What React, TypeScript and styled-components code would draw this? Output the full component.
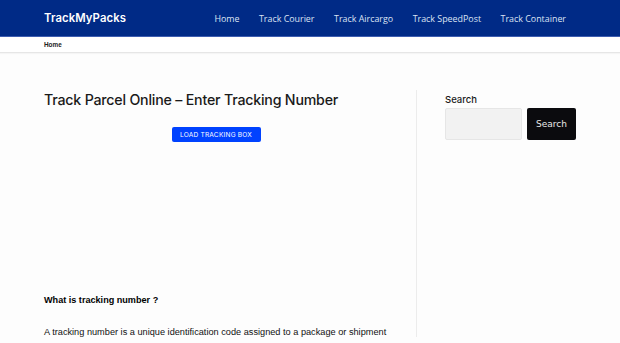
import styled, { createGlobalStyle } from 'styled-components';

const GlobalStyle = createGlobalStyle`
  html, body {
    margin: 0;
    padding: 0;
    background: #fdfdfd;
    font-family: 'Liberation Sans', Arial, sans-serif;
    overflow: hidden;
  }
`;

const navLinks = ['Home', 'Track Courier', 'Track Aircargo', 'Track SpeedPost', 'Track Container'];

const App = () => {
  return (
    <>
      <GlobalStyle />
      <Header>
        <HeaderInner>
          <Logo>TrackMyPacks</Logo>
          <Nav>
            {navLinks.map((link) => (
              <NavLink key={link}>{link}</NavLink>
            ))}
          </Nav>
        </HeaderInner>
      </Header>
      <Breadcrumb>
        <BreadcrumbInner>Home</BreadcrumbInner>
      </Breadcrumb>
      <Container>
        <Main>
          <Title>Track Parcel Online – Enter Tracking Number</Title>
          <ButtonRow>
            <LoadButton>LOAD TRACKING BOX</LoadButton>
          </ButtonRow>
          <Spacer />
          <SubHeading>What is tracking number ?</SubHeading>
          <Paragraph>
            A tracking number is a unique identification code assigned to a package or shipment
          </Paragraph>
        </Main>
        <Sidebar>
          <WidgetTitle>Search</WidgetTitle>
          <SearchForm>
            <SearchInput />
            <SearchButton>Search</SearchButton>
          </SearchForm>
        </Sidebar>
      </Container>
    </>
  );
};

export default App;

const Header = styled.header`
  background: #002a86;
  height: 36px;
  border-bottom: 1px solid #3d5db0;
`;

const HeaderInner = styled.div`
  display: flex;
  align-items: center;
  justify-content: space-between;
  height: 100%;
  padding: 0 44px 0 44px;
`;

const Logo = styled.div`
  color: #ffffff;
  font-family: Inter, 'Noto Sans', sans-serif;
  font-weight: 600;
  font-size: 11.3px;
  letter-spacing: 0.1px;
`;

const Nav = styled.nav`
  display: flex;
  gap: 19.5px;
  margin-right: 10px;
`;

const NavLink = styled.a`
  color: #dce3f3;
  font-family: 'Open Sans', 'Noto Sans', sans-serif;
  font-size: 8.9px;
`;

const Breadcrumb = styled.div`
  background: #ffffff;
  height: 15px;
  border-bottom: 1px solid #e6e6e6;
  box-shadow: 0 1px 1px rgba(0, 0, 0, 0.03);
`;

const BreadcrumbInner = styled.div`
  padding: 4px 44px 0;
  font-size: 6.4px;
  font-weight: bold;
  color: #222;
`;

const Container = styled.div`
  display: flex;
  padding: 0 44px;
`;

const Main = styled.main`
  width: 372px;
  border-right: 1px solid #ececec;
  margin-top: 37px;
  padding-top: 1px;
`;

const Title = styled.h1`
  margin: 0;
  font-family: Inter, 'Noto Sans', sans-serif;
  font-weight: 500;
  font-size: 14.2px;
  color: #1a1a1a;
  letter-spacing: -0.2px;
  line-height: 18px;
`;

const ButtonRow = styled.div`
  display: flex;
  justify-content: center;
  margin-top: 18px;
  padding-right: 28px;
`;

const LoadButton = styled.button`
  background: #0042ff;
  color: #ffffff;
  border: none;
  border-radius: 2px;
  height: 15px;
  width: 89px;
  padding: 0;
  font-family: Inter, sans-serif;
  font-size: 6.6px;
  letter-spacing: 0.2px;
`;

const Spacer = styled.div`
  height: 153px;
`;

const SubHeading = styled.h3`
  margin: 0;
  font-size: 9.1px;
  font-weight: bold;
  color: #000;
`;

const Paragraph = styled.p`
  margin: 22px 0 0;
  font-size: 9.2px;
  color: #111;
  white-space: nowrap;
`;

const Sidebar = styled.aside`
  padding-left: 28px;
  margin-top: 41px;
`;

const WidgetTitle = styled.div`
  font-family: Inter, sans-serif;
  font-weight: 500;
  font-size: 9.5px;
  color: #1a1a1a;
`;

const SearchForm = styled.div`
  display: flex;
  gap: 5px;
  margin-top: 3px;
`;

const SearchInput = styled.div`
  width: 75px;
  height: 30px;
  background: #f2f2f2;
  border: 1px solid #e6e6e6;
  border-radius: 2px;
`;

const SearchButton = styled.button`
  width: 49px;
  height: 32px;
  background: #0b0b0e;
  color: #e8e8e8;
  border: none;
  border-radius: 2px;
  font-family: 'DejaVu Sans', sans-serif;
  font-size: 9px;
  padding: 0;
`;
